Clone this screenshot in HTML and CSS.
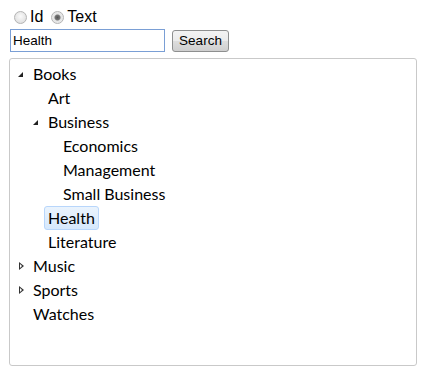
FILE: index.html
```html
<!DOCTYPE html>
<html lang="en">
<head>
  <meta charset="UTF-8" />
  <title>Tree search</title>
  <link rel="stylesheet" href="styles.css">
</head>
<body>
  <div class="mode">
    <label class="opt"><input type="radio" name="mode" /> Id</label>
    <label class="opt"><input type="radio" name="mode" checked /> Text</label>
  </div>
  <div class="search">
    <input type="text" class="query" value="Health" />
    <button class="go">Search</button>
  </div>
  <div class="tree">
    <ul>
      <li><i class="tg open"></i><span>Books</span>
        <ul>
          <li><i class="tg"></i><span>Art</span></li>
          <li><i class="tg open"></i><span>Business</span>
            <ul>
              <li><i class="tg"></i><span>Economics</span></li>
              <li><i class="tg"></i><span>Management</span></li>
              <li><i class="tg"></i><span>Small Business</span></li>
            </ul>
          </li>
          <li><i class="tg"></i><span class="sel">Health</span></li>
          <li><i class="tg"></i><span>Literature</span></li>
        </ul>
      </li>
      <li><i class="tg closed"></i><span>Music</span></li>
      <li><i class="tg closed"></i><span>Sports</span></li>
      <li><i class="tg"></i><span>Watches</span></li>
    </ul>
  </div>
</body>
</html>
```

FILE: styles.css
```css
body {
  margin: 0;
  padding: 9px 0 0 9px;
  font-family: "Liberation Sans", Arial, sans-serif;
  font-size: 16px;
  color: #000;
  background: #fff;
}

.mode {
  display: flex;
  align-items: center;
  height: 16px;
  padding-left: 5px;
}

.opt {
  display: flex;
  align-items: center;
  margin-right: 8px;
}

.opt input {
  appearance: none;
  width: 13px;
  height: 13px;
  margin: 0 3px 0 0;
  border: 1px solid #b4b4b4;
  border-radius: 50%;
  background: radial-gradient(circle at 50% 40%, #fafafa, #d8d8d8);
  box-sizing: border-box;
}

.opt input:checked {
  background: radial-gradient(circle, #555 0, #777 2.5px, #e4e4e4 3.5px, #f0f0f0 100%);
}

.search {
  display: flex;
  align-items: center;
  margin-top: 4px;
  padding-left: 1px;
}

.query {
  width: 155px;
  height: 23px;
  box-sizing: border-box;
  border: 1px solid #7a9fd5;
  padding: 0 2px;
  font-family: "Liberation Sans", Arial, sans-serif;
  font-size: 13.5px;
  color: #000;
  outline: none;
}

.go {
  margin-left: 7px;
  width: 57px;
  height: 22px;
  border: 1px solid #8e8f8f;
  border-radius: 3px;
  background: linear-gradient(#f3f3f3, #ebebeb 50%, #dddddd 51%, #cfcfcf);
  font-family: "Liberation Sans", Arial, sans-serif;
  font-size: 13.5px;
  color: #000;
  padding: 0;
}

.tree {
  margin-top: 6px;
  width: 408px;
  height: 308px;
  box-sizing: border-box;
  border: 1px solid #c9c9c9;
  border-radius: 3px;
  padding: 3px 4px;
  font-family: Lato, "Open Sans", sans-serif;
  font-size: 16px;
}

.tree ul {
  list-style: none;
  margin: 0;
  padding: 0;
}

.tree ul ul {
  padding-left: 15px;
}

.tree li > span {
  display: inline-block;
  line-height: 22px;
  padding: 0 3px;
  border: 1px solid transparent;
  border-radius: 3px;
  vertical-align: top;
}

.tree .sel {
  background: linear-gradient(#eaf3fd, #d6e8fc);
  border-color: #b8d6fb;
}

.tg {
  display: inline-block;
  width: 15px;
  height: 24px;
  vertical-align: top;
  position: relative;
}

.tg.open::after {
  content: "";
  position: absolute;
  left: 4px;
  top: 10px;
  border-style: solid;
  border-width: 0 0 5px 5px;
  border-color: transparent transparent #222 transparent;
}

.tg.closed::after {
  content: "";
  position: absolute;
  left: 5px;
  top: 8px;
  width: 0;
  height: 0;
  border-style: solid;
  border-width: 4px 0 4px 5px;
  border-color: transparent transparent transparent #333;
}

.tg.closed::before {
  content: "";
  position: absolute;
  left: 5px;
  top: 10px;
  border-style: solid;
  border-width: 2px 0 2px 2px;
  border-color: transparent transparent transparent #fff;
  z-index: 1;
  margin-left: 1px;
}
```
